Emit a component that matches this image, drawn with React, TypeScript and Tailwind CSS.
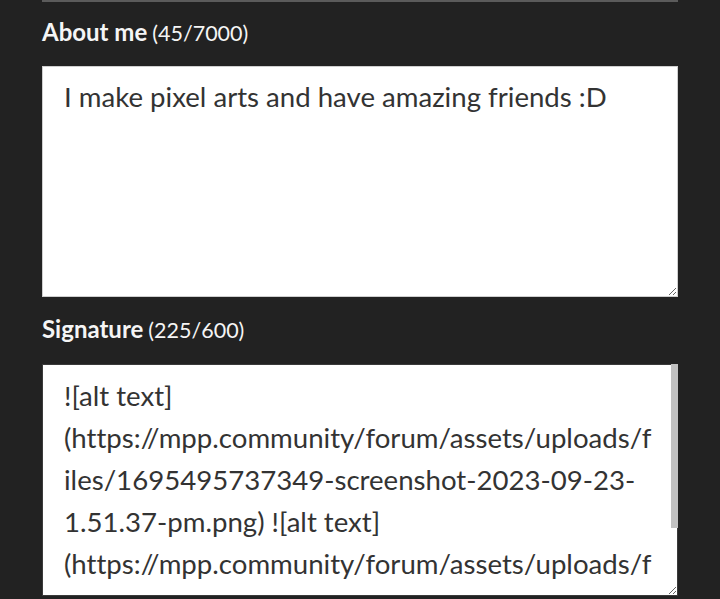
import { useState } from 'react';

const SIGNATURE =
  '![alt text](https://mpp.community/forum/assets/uploads/files/1695495737349-screenshot-2023-09-23-1.51.37-pm.png) ![alt text](https://mpp.community/forum/assets/uploads/files/1695495744471-screenshot-2023-09-23-1.51.44-pm.png)';

function FieldLabel({ title, count }: { title: string; count: string }) {
  return (
    <label className="block h-[30px] leading-[30px] text-[#f5f5f5]">
      <span className="text-[24px] font-bold">{title}</span>
      <span className="ml-[5px] text-[21.5px]">{count}</span>
    </label>
  );
}

export default function App() {
  const [about, setAbout] = useState('I make pixel arts and have amazing friends :D');
  const [signature, setSignature] = useState(SIGNATURE);

  return (
    <div
      className="min-h-[599px] w-[720px] overflow-hidden bg-[#222222] pl-[42px] pr-[42px]"
      style={{ fontFamily: 'Lato, "Noto Sans", sans-serif' }}
    >
      {/* bottom edge of the field above */}
      <div className="h-[2px] bg-[#5b5b5b]" />

      <div className="pt-[15px] pb-[19px]">
        <FieldLabel title="About me" count={`(${about.length}/7000)`} />
      </div>
      <textarea
        value={about}
        onChange={(e) => setAbout(e.target.value)}
        className="block h-[231px] w-[636px] resize-y border border-[#cfcfcf] bg-white px-[21px] pt-[9px] pb-[11px] text-[27.6px] leading-[42px] text-[#333333] outline-none [font-variant-ligatures:none]"
      />

      <div className="pt-[17px] pb-[20px]">
        <FieldLabel title="Signature" count={`(${signature.length}/600)`} />
      </div>
      <div className="relative w-[636px]">
        <textarea
          value={signature}
          onChange={(e) => setSignature(e.target.value)}
          className="block h-[232px] w-[636px] resize-y border border-[#3a3a3a] bg-white pl-[21px] pr-[24px] py-[10px] text-[27.6px] leading-[42px] text-[#333333] outline-none [font-variant-ligatures:none] [scrollbar-width:none] [&::-webkit-scrollbar]:hidden"
        />
        {/* scrollbar */}
        <div className="pointer-events-none absolute top-0 right-0 h-[164px] w-[7px] bg-[#c1c1c1]" />
      </div>
    </div>
  );
}
